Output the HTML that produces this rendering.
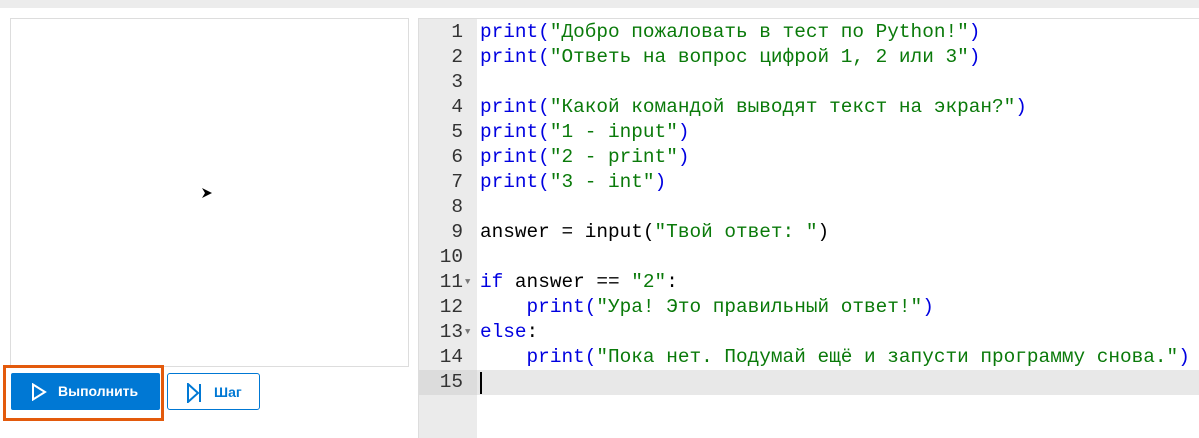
<!DOCTYPE html>
<html><head><meta charset="utf-8"><style>
body{margin:0;width:1199px;height:438px;background:#fff;position:relative;overflow:hidden;font-family:"Liberation Sans","DejaVu Sans",sans-serif}
.top{position:absolute;left:0;top:0;width:1199px;height:8px;background:#ececec}
.canvas{position:absolute;left:10px;top:18px;width:399px;height:349px;border:1px solid #ddd;box-sizing:border-box}
.ed{position:absolute;left:418px;top:18px;width:781px;height:420px;border-left:1px solid #ddd;border-top:1px solid #ddd;box-sizing:border-box}
.gut{position:absolute;left:0;top:0;width:58px;height:100%;background:#ebebeb}
.lines{position:absolute;left:0;top:1px;font-family:"Liberation Mono",monospace;font-size:19.4px}
.l{height:25px;line-height:25px;white-space:pre;position:relative}
.n{position:absolute;left:0;width:44px;text-align:right;color:#333}
.c{position:absolute;left:61px;color:#000}
.k{color:#0000e0}.s{color:#0a7a0a}
.f{position:absolute;left:46px;top:0;font-size:9px;color:#777}
.hl{background:#e8e8e8}
.hl .n{background:#dcdcdc;width:58px;padding-right:14px;box-sizing:border-box}
.orange{position:absolute;left:3px;top:365px;width:161px;height:56px;border:3px solid #e35a0c;box-sizing:border-box}
.run{position:absolute;left:11px;top:373px;width:149px;height:37px;background:#0078d4;border-radius:2px;color:#fff;font-weight:bold;font-size:14px}
.step{position:absolute;left:167px;top:373px;width:93px;height:37px;border:1px solid #0078d4;border-radius:3px;box-sizing:border-box;color:#0078d4;font-weight:bold;font-size:14px}
</style></head><body>
<div class="top"></div>
<div class="canvas"><svg style="position:absolute;left:190px;top:168px" width="12" height="12"><path d="M1 1 L11 6 L1 11 L4 6 Z" fill="#000"/></svg></div>
<div class="ed"><div class="gut"></div>
<div class="lines">
<div class="l"><span class="n">1</span><span class="c"><span class="k">print(</span><span class="s">"Добро пожаловать в тест по Python!"</span><span class="k">)</span></span></div>
<div class="l"><span class="n">2</span><span class="c"><span class="k">print(</span><span class="s">"Ответь на вопрос цифрой 1, 2 или 3"</span><span class="k">)</span></span></div>
<div class="l"><span class="n">3</span></div>
<div class="l"><span class="n">4</span><span class="c"><span class="k">print(</span><span class="s">"Какой командой выводят текст на экран?"</span><span class="k">)</span></span></div>
<div class="l"><span class="n">5</span><span class="c"><span class="k">print(</span><span class="s">"1 - input"</span><span class="k">)</span></span></div>
<div class="l"><span class="n">6</span><span class="c"><span class="k">print(</span><span class="s">"2 - print"</span><span class="k">)</span></span></div>
<div class="l"><span class="n">7</span><span class="c"><span class="k">print(</span><span class="s">"3 - int"</span><span class="k">)</span></span></div>
<div class="l"><span class="n">8</span></div>
<div class="l"><span class="n">9</span><span class="c">answer = input(<span class="s">"Твой ответ: "</span>)</span></div>
<div class="l"><span class="n">10</span></div>
<div class="l"><span class="n">11</span><span class="f">▼</span><span class="c"><span class="k">if</span> answer == <span class="s">"2"</span>:</span></div>
<div class="l"><span class="n">12</span><span class="c">    <span class="k">print(</span><span class="s">"Ура! Это правильный ответ!"</span><span class="k">)</span></span></div>
<div class="l"><span class="n">13</span><span class="f">▼</span><span class="c"><span class="k">else</span>:</span></div>
<div class="l"><span class="n">14</span><span class="c">    <span class="k">print(</span><span class="s">"Пока нет. Подумай ещё и запусти программу снова."</span><span class="k">)</span></span></div>
<div class="l hl" style="width:781px"><span class="n">15</span><span class="c" style="border-left:2px solid #000;height:22px;top:2px"></span></div>
</div></div>
<div class="orange"></div>
<div class="run"><svg style="position:absolute;left:20px;top:10px" width="16" height="18"><path d="M2 1.5 L14 9 L2 16.5 Z" fill="none" stroke="#fff" stroke-width="2"/></svg><span style="position:absolute;left:47px;top:10px">Выполнить</span></div>
<div class="step"><svg style="position:absolute;left:18px;top:9px" width="16" height="20"><path d="M2 1 L12 10 L2 19 Z" fill="none" stroke="#0078d4" stroke-width="2"/><path d="M14 1 V19" stroke="#0078d4" stroke-width="2"/></svg><span style="position:absolute;left:46px;top:10px">Шаг</span></div>
</body></html>
